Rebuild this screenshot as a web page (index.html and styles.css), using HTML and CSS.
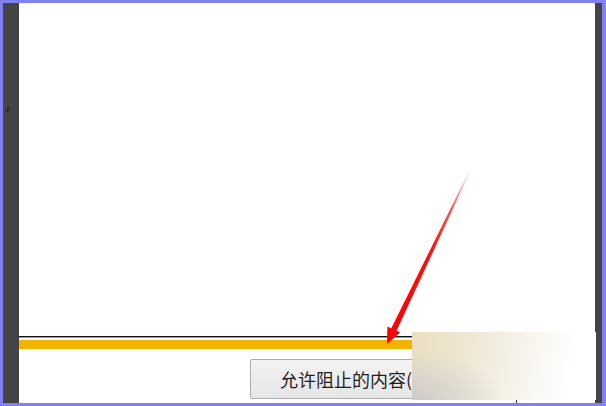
FILE: index.html
```html
<!DOCTYPE html>
<html lang="zh">
<head>
<meta charset="utf-8">
<title>允许阻止的内容</title>
<link rel="stylesheet" href="styles.css">
</head>
<body>
<div class="frame">
  <div class="strip strip-left"><span class="tick"></span></div>
  <div class="main">
    <div class="page"></div>
    <div class="rule"></div>
    <div class="infobar"></div>
    <div class="actions">
      <button class="btn">允许阻止的内容(A)</button>
    </div>
  </div>
  <div class="strip strip-right"></div>

  <div class="watermark"></div>
  <div class="stub"></div>

  <svg class="arrow" width="606" height="406" viewBox="0 0 606 406">
    <defs>
      <linearGradient id="fade" x1="470" y1="170" x2="392" y2="330" gradientUnits="userSpaceOnUse">
        <stop offset="0" stop-color="#ff2020" stop-opacity="0"/>
        <stop offset="0.25" stop-color="#ff2020" stop-opacity="0.8"/>
        <stop offset="0.5" stop-color="#ff1010" stop-opacity="1"/>
        <stop offset="1" stop-color="#ff0000" stop-opacity="1"/>
      </linearGradient>
    </defs>
    <polygon points="469.6,170 470.6,170.6 396.4,331 391.2,328.6" fill="url(#fade)"/>
    <polygon points="387,344 387.4,326.6 400.2,332.6" fill="#ff0000"/>
  </svg>
</div>
</body>
</html>
```

FILE: styles.css
```css
html, body {
  margin: 0;
  padding: 0;
  background: #ffffff;
}

.frame {
  position: relative;
  width: 606px;
  height: 406px;
  box-sizing: border-box;
  border-style: solid;
  border-color: #8080f2;
  border-width: 3px 4px 3px 3px;
  display: flex;
  overflow: hidden;
  font-family: "Noto Sans CJK SC", "Noto Sans", sans-serif;
}

.strip {
  background: #444446;
  flex: none;
}

.strip-left {
  width: 16px;
  position: relative;
}

.tick {
  position: absolute;
  left: 4px;
  top: 104px;
  width: 2px;
  height: 5px;
  background: #2a2a2a;
  transform: skewX(-15deg);
}

.strip-right {
  width: 7px;
}

.main {
  flex: 1;
  display: flex;
  flex-direction: column;
  background: #ffffff;
}

.page {
  height: 333px;
  flex: none;
}

.rule {
  height: 1px;
  background: #111111;
  border-bottom: 1px solid #9a9a9a;
  margin-bottom: 2px;
  flex: none;
}

.infobar {
  height: 9px;
  background: #f2b400;
  flex: none;
}

.actions {
  padding: 10px 0 0 231px;
  flex: none;
}

.btn {
  display: block;
  height: 40px;
  box-sizing: border-box;
  padding: 0 29px;
  border: 1px solid #adadad;
  border-radius: 2px;
  background: linear-gradient(#f3f3f3, #e6e6e6);
  color: #1e1e1e;
  font-family: "Noto Sans CJK SC", "Noto Sans", sans-serif;
  font-size: 18px;
  line-height: 36px;
  white-space: nowrap;
}

.watermark {
  position: absolute;
  left: 409px;
  top: 329px;
  width: 184px;
  height: 68px;
  background:
    radial-gradient(ellipse 90px 50px at 0% 100%, rgba(200, 200, 204, 0.85), rgba(220, 220, 222, 0) 100%),
    linear-gradient(100deg, #ebdfc2 0%, #efe7d4 30%, #f6f2ea 55%, #ffffff 85%);
}

.stub {
  position: absolute;
  left: 513px;
  top: 397px;
  width: 1px;
  height: 3px;
  background: #333344;
}

.arrow {
  position: absolute;
  left: -3px;
  top: -3px;
  pointer-events: none;
}
```
